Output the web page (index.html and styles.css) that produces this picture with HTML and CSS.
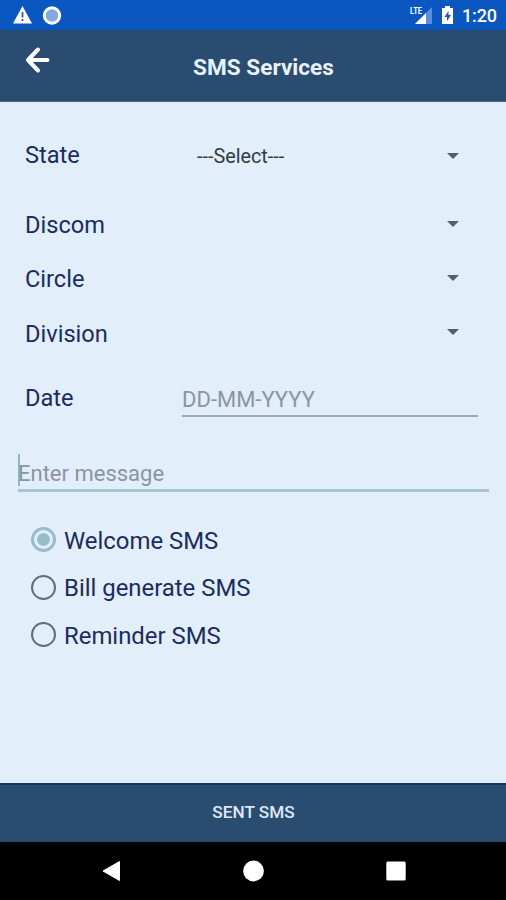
FILE: index.html
```html
<!DOCTYPE html>
<html lang="en">
<head>
<meta charset="utf-8">
<title>SMS Services</title>
<link rel="stylesheet" href="styles.css">
</head>
<body>
<div class="screen">
  <div class="status">
    <svg class="status-left" width="52" height="22" viewBox="0 0 52 22">
      <path d="M10.500 3L20 20.500H1z" fill="#fff"/>
      <path d="M10.500 9v5.500M10.500 16v2" stroke="#3155b0" stroke-width="1.800"/>
      <circle cx="40" cy="12.500" r="7.700" fill="#83a9e2" stroke="#fff" stroke-width="3"/>
    </svg>
    <div class="status-right">
      <svg width="46" height="20" viewBox="0 0 46 20">
        <path d="M23 2v17H6z" fill="#5e8eda"/>
        <path d="M17 8v11H6z" fill="#fff"/>
        <text class="lte" x="1" y="9" textLength="12" lengthAdjust="spacingAndGlyphs">LTE</text>
        <path d="M33 3h3V1h5v2h3v16H33z" fill="#fff"/>
        <path d="M39.500 6L35.500 12h2.500v4l4-6h-2.500z" fill="#1558be"/>
      </svg>
      <span class="clock">1:20</span>
    </div>
  </div>
  <header class="appbar">
    <svg class="back" width="26" height="28" viewBox="0 0 26 28"><path d="M14 3.500L4 14l10 10.500M4.500 14h19" fill="none" stroke="#fff" stroke-width="4" stroke-linecap="round" stroke-linejoin="round"/></svg>
    <h1>SMS Services</h1>
  </header>
  <main class="form">
    <div class="row row-state"><label>State</label><span class="value">---Select---</span><i class="caret"></i></div>
    <div class="row"><label>Discom</label><i class="caret"></i></div>
    <div class="row"><label>Circle</label><i class="caret"></i></div>
    <div class="row"><label>Division</label><i class="caret"></i></div>
    <div class="row row-date"><label>Date</label><div class="date">DD-MM-YYYY</div></div>
    <div class="message"><span>Enter message</span></div>
    <div class="options">
      <div class="option selected"><i class="radio"></i><span>Welcome SMS</span></div>
      <div class="option"><i class="radio"></i><span>Bill generate SMS</span></div>
      <div class="option"><i class="radio"></i><span>Reminder SMS</span></div>
    </div>
  </main>
  <div class="send">SENT SMS</div>
  <nav class="nav">
    <svg width="20" height="22" viewBox="0 0 20 22"><path d="M18.500 1.500v19L2 11z" fill="#fff" stroke="#fff" stroke-linejoin="round"/></svg>
    <svg width="22" height="22" viewBox="0 0 22 22"><circle cx="10.500" cy="11" r="10.400" fill="#fff"/></svg>
    <svg width="20" height="20" viewBox="0 0 20 20"><rect x="0.300" y="0.500" width="19.400" height="19" rx="1.500" fill="#fff"/></svg>
  </nav>
</div>
</body>
</html>
```

FILE: styles.css
```css
* { box-sizing: border-box; }
body { margin: 0; font-family: Roboto, sans-serif; }
.screen { width: 506px; height: 900px; display: flex; flex-direction: column; background: #e2eefa; overflow: hidden; }
.status { height: 30px; flex: none; display: flex; justify-content: space-between; padding: 3px 9px 0 12px; background: #0b57c0; }
.status-right { display: flex; gap: 7px; padding-top: 2px; }
.lte { font: bold 9px Roboto, sans-serif; fill: #fff; }
.clock { color: #fff; font-size: 18px; line-height: 22px; font-weight: 500; letter-spacing: -0.1px; }
.appbar { height: 72px; flex: none; display: grid; grid-template-columns: 26px 1fr; padding: 0 29px 0 24px; background: #294c70; border-bottom: 1px solid #4a6887; }
.back { margin-top: 16px; }
h1 { margin: 23px 0 0; text-align: center; color: #e8f1fd; font-size: 22.600px; line-height: 30px; font-weight: 700; }
.form { flex: 1; padding-top: 26px; }
.row { height: 54.400px; display: flex; align-items: center; padding: 0 47px 0 25px; }
.row label { width: 157px; margin-top: -1px; color: #1a2c62; font-size: 23.600px; line-height: 28px; }
.row-state { margin-bottom: 16px; }
.row-state label { margin-top: 0; }
.value { margin: 4px 0 0 15px; color: #333c42; font-size: 19.800px; line-height: 24px; }
.caret { margin: -4px 0 0 auto; border: 6px solid transparent; border-top-color: #526069; border-bottom: 0; }
.row-state .caret { margin-top: 2px; }
.row-date { margin-top: 10px; padding-right: 28px; }
.date { flex: 1; height: 37px; margin-top: -1px; border-bottom: 2px solid #9caab6; color: #8b959e; font-size: 22px; line-height: 39px; }
.message { height: 38px; margin: 28px 17px 0 18px; border-bottom: 3px solid #a5c6cf; color: #8b959e; font-size: 22px; line-height: 40px; }
.message span { display: block; height: 32px; border-left: 2px solid #8fb5bd; text-indent: -2px; }
.options { margin-top: 24px; padding-left: 31px; }
.option { height: 47.500px; display: flex; align-items: center; gap: 8px; color: #1a2c62; font-size: 23.900px; line-height: 28px; }
.option span { margin-top: 2px; }
.radio { width: 25px; height: 25px; border: 2px solid #626d74; border-radius: 50%; display: flex; align-items: center; justify-content: center; }
.selected .radio { border: 3px solid #98bcca; }
.selected .radio::before { content: ""; width: 13px; height: 13px; border-radius: 50%; background: #98bcca; }
.send { height: 59px; flex: none; background: #294c70; border-top: 2px solid #12345f; color: #dce8f8; text-align: center; font-size: 17.200px; line-height: 55px; font-weight: 500; text-indent: 1px; }
.nav { height: 58px; flex: none; display: flex; align-items: center; justify-content: space-between; padding: 0 100px 0 101px; background: #000; }
```
